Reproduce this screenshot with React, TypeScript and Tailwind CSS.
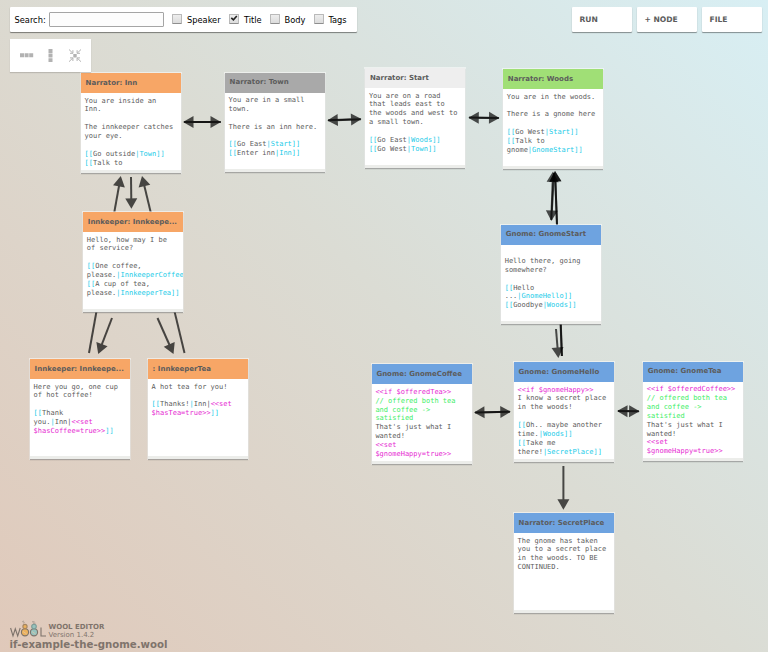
import React from "react";

type Kind = "t" | "k" | "m" | "g";
type Span = [Kind, string];
type Line = Span[];

type StoryNode = {
  id: string;
  title: string;
  x: number;
  y: number;
  head: string;
  lines: Line[];
};

const ORANGE = "bg-[#f7a666]";
const BLUE = "bg-[#6ea3e0]";
const GREEN = "bg-[#a0df76]";
const GREY = "bg-[#a9a9a9]";
const LIGHT = "bg-[#eeeeee]";

const INK: Record<Kind, string> = {
  t: "text-[#5c5c5c]",
  k: "text-[#22cbe8]",
  m: "text-[#e628d2]",
  g: "text-[#40ee66]",
};

const nodes: StoryNode[] = [
  {
    id: "inn", title: "Narrator: Inn", x: 81, y: 73, head: ORANGE,
    lines: [
      [["t", "You are inside an"]], [["t", "Inn."]], [],
      [["t", "The innkeeper catches"]], [["t", "your eye."]], [],
      [["k", "[["], ["t", "Go outside"], ["k", "|Town]]"]],
      [["k", "[["], ["t", "Talk to"]],
    ],
  },
  {
    id: "town", title: "Narrator: Town", x: 225, y: 72.6, head: GREY,
    lines: [
      [["t", "You are in a small"]], [["t", "town."]], [],
      [["t", "There is an inn here."]], [],
      [["k", "[["], ["t", "Go East"], ["k", "|Start]]"]],
      [["k", "[["], ["t", "Enter inn"], ["k", "|Inn]]"]],
    ],
  },
  {
    id: "start", title: "Narrator: Start", x: 365.3, y: 68, head: LIGHT,
    lines: [
      [["t", "You are on a road"]], [["t", "that leads east to"]],
      [["t", "the woods and west to"]], [["t", "a small town."]], [],
      [["k", "[["], ["t", "Go East"], ["k", "|Woods]]"]],
      [["k", "[["], ["t", "Go West"], ["k", "|Town]]"]],
    ],
  },
  {
    id: "woods", title: "Narrator: Woods", x: 503.2, y: 69, head: GREEN,
    lines: [
      [["t", "You are in the woods."]], [], [["t", "There is a gnome here"]], [],
      [["k", "[["], ["t", "Go West"], ["k", "|Start]]"]],
      [["k", "[["], ["t", "Talk to"]],
      [["t", "gnome"], ["k", "|GnomeStart]]"]],
    ],
  },
  {
    id: "innkeeper", title: "Innkeeper: Innkeepe...", x: 83.2, y: 212, head: ORANGE,
    lines: [
      [["t", "Hello, how may I be"]], [["t", "of service?"]], [],
      [["k", "[["], ["t", "One coffee,"]],
      [["t", "please."], ["k", "|InnkeeperCoffee"]],
      [["k", "[["], ["t", "A cup of tea,"]],
      [["t", "please."], ["k", "|InnkeeperTea]]"]],
    ],
  },
  {
    id: "innkeepercoffee", title: "Innkeeper: Innkeepe...", x: 30, y: 359, head: ORANGE,
    lines: [
      [["t", "Here you go, one cup"]], [["t", "of hot coffee!"]], [],
      [["k", "[["], ["t", "Thank"]],
      [["t", "you."], ["k", "|"], ["t", "Inn|"], ["m", "<<set"]],
      [["m", "$hasCoffee=true>>"], ["k", "]]"]],
    ],
  },
  {
    id: "innkeepertea", title: ": InnkeeperTea", x: 148, y: 359, head: ORANGE,
    lines: [
      [["t", "A hot tea for you!"]], [],
      [["k", "[["], ["t", "Thanks!"], ["k", "|"], ["t", "Inn|"], ["m", "<<set"]],
      [["m", "$hasTea=true>>"], ["k", "]]"]],
    ],
  },
  {
    id: "gnomestart", title: "Gnome: GnomeStart", x: 501.1, y: 224.5, head: BLUE,
    lines: [
      [], [["t", "Hello there, going"]], [["t", "somewhere?"]], [],
      [["k", "[["], ["t", "Hello"]],
      [["t", "..."], ["k", "|GnomeHello]]"]],
      [["k", "[["], ["t", "Goodbye"], ["k", "|Woods]]"]],
    ],
  },
  {
    id: "gnomecoffee", title: "Gnome: GnomeCoffee", x: 371.8, y: 364.2, head: BLUE,
    lines: [
      [["m", "<<if $offeredTea>>"]],
      [["g", "// offered both tea"]], [["g", "and coffee ->"]], [["g", "satisfied"]],
      [["t", "That's just what I"]], [["t", "wanted!"]],
      [["m", "<<set"]], [["m", "$gnomeHappy=true>>"]],
    ],
  },
  {
    id: "gnomehello", title: "Gnome: GnomeHello", x: 514, y: 362, head: BLUE,
    lines: [
      [["m", "<<if $gnomeHappy>>"]],
      [["t", "I know a secret place"]], [["t", "in the woods!"]], [],
      [["k", "[["], ["t", "Oh.. maybe another"]],
      [["t", "time."], ["k", "|Woods]]"]],
      [["k", "[["], ["t", "Take me"]],
      [["t", "there!"], ["k", "|SecretPlace]]"]],
    ],
  },
  {
    id: "gnometea", title: "Gnome: GnomeTea", x: 643.2, y: 361.7, head: BLUE,
    lines: [
      [["m", "<<if $offeredCoffee>>"]],
      [["g", "// offered both tea"]], [["g", "and coffee ->"]], [["g", "satisfied"]],
      [["t", "That's just what I"]], [["t", "wanted!"]],
      [["m", "<<set"]], [["m", "$gnomeHappy=true>>"]],
    ],
  },
  {
    id: "secret", title: "Narrator: SecretPlace", x: 514, y: 513, head: BLUE,
    lines: [
      [["t", "The gnome has taken"]], [["t", "you to a secret place"]],
      [["t", "in the woods. TO BE"]], [["t", "CONTINUED."]],
    ],
  },
];

// Each link is drawn from its first point to its arrow tip at the second.
const links: [number, number, number, number][] = [
  [184, 122, 221, 122], [221, 122, 183, 122],
  [328, 120.3, 361.5, 119], [361, 119.2, 327.3, 120.5],
  [469, 117.5, 499.5, 118], [499, 118, 468.3, 117.7],
  [89, 353, 120.8, 176], [184.5, 353, 142, 176],
  [131, 177, 131.4, 208.8],
  [112, 318, 98.2, 354], [157.5, 318, 173.5, 354],
  [554, 173, 551.3, 221], [551.3, 220, 553, 171.5],
  [561.8, 356, 555, 171], [562, 356, 555, 171],
  [556, 329, 558.4, 358],
  [475, 412.5, 510.8, 411.7], [510, 411.7, 474, 412.5],
  [618, 411, 639.6, 411.3], [639, 411.3, 617, 411],
  [563.4, 466, 563.4, 509.8],
];

function Arrow({ p }: { p: [number, number, number, number] }) {
  const [x1, y1, x2, y2] = p;
  const len = Math.hypot(x2 - x1, y2 - y1);
  const ux = (x2 - x1) / len;
  const uy = (y2 - y1) / len;
  const bx = x2 - ux * 10.5;
  const by = y2 - uy * 10.5;
  return (
    <g fill="#000" stroke="#000" opacity="0.68">
      <line x1={x1} y1={y1} x2={x2 - ux * 3} y2={y2 - uy * 3} strokeWidth="2" />
      <polygon
        stroke="none"
        points={`${x2},${y2} ${bx - uy * 6},${by + ux * 6} ${bx + uy * 6},${by - ux * 6}`}
      />
    </g>
  );
}

function NodeCard({ node }: { node: StoryNode }) {
  return (
    <div
      className="absolute flex h-[99.5px] w-[100.2px] flex-col bg-white shadow-[0_1px_1px_rgba(0,0,0,0.3),0_0_0_1px_rgba(255,255,255,0.5)]"
      style={{ left: node.x, top: node.y }}
    >
      <div className={`flex h-5 shrink-0 items-center pl-[4.6px] ${node.head}`}>
        <span className="whitespace-nowrap text-[7px] leading-[9px] font-bold text-[#5c5c5c]">{node.title}</span>
      </div>
      <div className="min-h-0 flex-1 overflow-hidden pt-[3.6px] pl-[3.6px] font-['DejaVu_Sans_Mono',monospace] text-[7px]">
        {node.lines.map((line, i) => (
          <div key={i} className="h-[8.86px] leading-[8.86px] whitespace-pre">
            {line.map(([kind, text], j) => (
              <span key={j} className={INK[kind]}>{text}</span>
            ))}
          </div>
        ))}
      </div>
      <div className="h-[3px] shrink-0 bg-[#ecedea]" />
    </div>
  );
}

function Check({ label, on, className }: { label: string; on?: boolean; className: string }) {
  return (
    <label className={`flex items-center ${className}`}>
      <span className="flex h-[10px] w-[10px] items-center justify-center rounded-[1px] border border-[#b9b9b9] border-b-[#8e8e8e] bg-linear-to-b from-[#ededed] to-[#dcdcdc]">
        {on && (
          <svg width="8" height="8" viewBox="0 0 8 8" fill="none" stroke="#222" strokeWidth="1.6">
            <path d="M1.3 2.8 3.4 4.8 6.8 1" />
          </svg>
        )}
      </span>
      <span className="ml-[5px]">{label}</span>
    </label>
  );
}

function MenuButton({ label }: { label: string }) {
  return (
    <button className="flex h-[25px] w-[60px] items-center rounded-[1px] bg-white pl-[7.5px] text-[7.6px] font-bold text-[#5c5c5c] shadow-[0_1px_1px_rgba(0,0,0,0.4)]">
      {label}
    </button>
  );
}

function Logo() {
  return (
    <svg width="37" height="19" viewBox="0 0 37 19" fill="none" stroke="#7d736b" strokeWidth="1.1">
      <path d="M.6 9 3 17 5.3 9.8 7.7 17 10.2 9M31 8.5V17H36" />
      <circle cx="15" cy="13.3" r="3.6" fill="#ecb25c" />
      <circle cx="15" cy="7.5" r="2.1" fill="#ecb25c" stroke="#a58560" />
      <circle cx="24" cy="13.3" r="3.6" fill="#98c3bd" />
      <circle cx="24" cy="7.5" r="2.3" fill="#98c3bd" stroke="#7b9c97" />
      <path d="M12.2 2.8 14 2M13 4.2 14.6 3.4M22 2.8H24.5M23 4.2H25.5" stroke="#9b9087" strokeWidth=".8" />
      <path d="M13 12.5 16.7 15M22 12.5 25.6 15" stroke="#e2c9ac" strokeWidth=".7" />
    </svg>
  );
}

export default function App() {
  return (
    <div className="relative flex h-[652px] w-[768px] flex-col justify-between overflow-hidden bg-linear-[45deg,#e0c9ba_0%,#dbdcd4_52%,#d8eff4_100%] font-['DejaVu_Sans',sans-serif]">
      <svg className="absolute inset-0" width="768" height="652">
        {links.map((p, i) => (
          <Arrow key={i} p={p} />
        ))}
      </svg>
      {nodes.map((n) => (
        <NodeCard key={n.id} node={n} />
      ))}

      <header className="relative flex flex-col gap-[7px] pt-[7px] pr-[6px] pl-[10px]">
        <div className="flex justify-between">
          <div className="flex h-[25px] w-[347px] items-center rounded-[1px] bg-white pl-[4.5px] font-['DejaVu_Sans_Condensed','DejaVu_Sans',sans-serif] font-stretch-semi-condensed text-[9.2px] text-black shadow-[0_1px_1px_rgba(0,0,0,0.45)]">
            <span className="w-[34.5px]">Search:</span>
            <input className="h-[15px] w-[115px] rounded-[1px] border border-[#a5a5a5] bg-[#fcfcfc] px-1" />
            <Check label="Speaker" className="ml-[8px] w-[57px]" />
            <Check label="Title" on className="w-[40.5px]" />
            <Check label="Body" className="w-[44px]" />
            <Check label="Tags" className="" />
          </div>
          <div className="flex gap-[5px]">
            <MenuButton label="RUN" />
            <MenuButton label="+ NODE" />
            <MenuButton label="FILE" />
          </div>
        </div>
        <div className="flex h-[33px] w-[81px] items-center bg-white pl-[10px] shadow-[0_1px_1px_rgba(0,0,0,0.15)]">
          <svg width="62" height="13" viewBox="0 0 62 13" fill="#b2b2b2">
            <path d="M0 4.2h4v4H0zM4.6 4.2h4v4h-4zM9.2 4.2h4v4h-4zM28.5 0h4v4h-4zM28.5 4.6h4v4h-4zM28.5 9.2h4v4h-4zM53.3 5h3.4v3.4h-3.4z" />
            <path d="M49 .5 52.6 4M50 4.3h2.9V1.2M61 .5 57.4 4M60 4.3h-2.9V1.2M49 12.7 52.6 9.2M50 8.9h2.9V12M61 12.7 57.4 9.2M60 8.9h-2.9V12" fill="none" stroke="#b2b2b2" strokeWidth="1" />
          </svg>
        </div>
      </header>

      <footer className="relative flex flex-col pb-[1.5px] pl-[9.5px] text-[#7f746c]">
        <div className="flex h-[20px] items-start gap-[2px]">
          <Logo />
          <div className="pt-[4px] text-[7px] leading-[8px]">
            <div className="font-bold">WOOL EDITOR</div>
            <div>Version 1.4.2</div>
          </div>
        </div>
        <div className="text-[10.2px] leading-[12px] font-bold">if-example-the-gnome.wool</div>
      </footer>
    </div>
  );
}
